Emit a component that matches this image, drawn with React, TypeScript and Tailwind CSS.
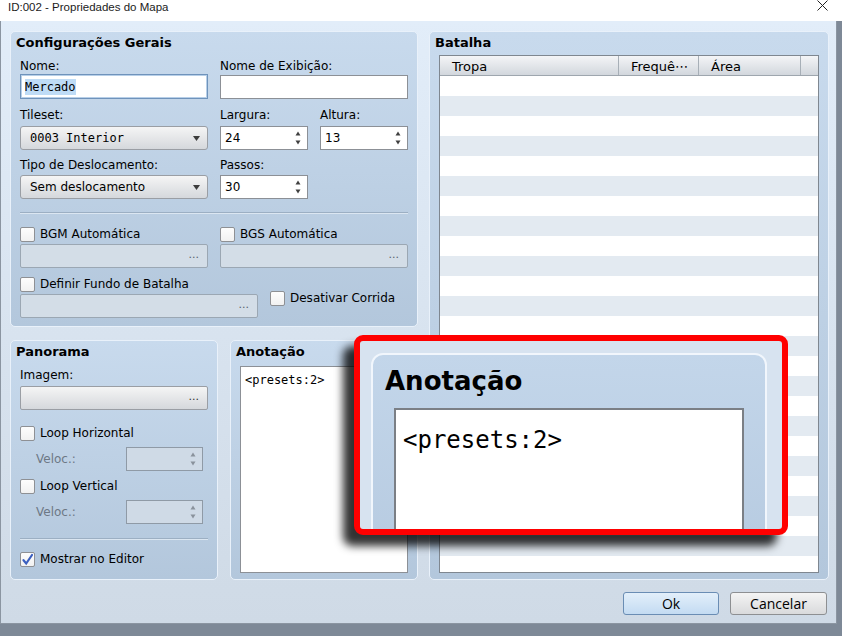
import React from 'react';

const mono = "font-['DejaVu_Sans_Mono',monospace]";

function Label({ children, className = '' }: { children: React.ReactNode; className?: string }) {
  return <div className={`h-[14px] leading-[14px] ${className}`}>{children}</div>;
}

function Panel({ title, className = '', children }: { title: string; className?: string; children?: React.ReactNode }) {
  return (
    <section
      className={`flex flex-col rounded-[5px] border border-[#e9f1fa] bg-linear-to-b from-[#c8daed] to-[#b3c7dc] px-[9px] ${className}`}
    >
      <h2 className="-ml-[4px] mt-[3px] h-[16px] text-[13px] font-bold leading-[16px]">{title}</h2>
      {children}
    </section>
  );
}

function DownTri({ color = '#3c3c3c' }: { color?: string }) {
  return (
    <svg width="7" height="5" viewBox="0 0 7 5">
      <path d="M0 0h7L3.5 5z" fill={color} />
    </svg>
  );
}

function SpinArrows({ color = '#404040' }: { color?: string }) {
  return (
    <svg width="6" height="14" viewBox="0 0 6 14">
      <path d="M0.5 4.5L3 0.5L5.5 4.5z" fill={color} />
      <path d="M0.5 9.5H5.5L3 13.5z" fill={color} />
    </svg>
  );
}

function Select({ text, isMono = false }: { text: string; isMono?: boolean }) {
  return (
    <div className="flex h-[24px] w-[188px] items-center justify-between rounded-[3px] border border-[#9a9ea4] bg-linear-to-b from-[#f5f5f5] to-[#d5d8dc] pl-[9px] pr-[7px]">
      <span className={isMono ? mono : ''}>{text}</span>
      <DownTri />
    </div>
  );
}

function Spin({ value = '', disabled = false, className = 'w-[88px]' }: { value?: string; disabled?: boolean; className?: string }) {
  return (
    <div
      className={`flex h-[24px] items-center justify-between border pl-[4px] pr-[6px] ${className} ${
        disabled ? 'border-[#8f9aa6] bg-[#cfdae6]' : 'border-[#8c9096] bg-white'
      }`}
    >
      <span>{value}</span>
      <SpinArrows color={disabled ? '#8a929c' : '#404040'} />
    </div>
  );
}

function FileField({ enabled = false, className = 'w-[188px]' }: { enabled?: boolean; className?: string }) {
  return (
    <div
      className={`flex h-[24px] items-center justify-end rounded-[2px] border pr-[8px] text-[11px] leading-none ${className} ${
        enabled
          ? 'border-[#9a9ea4] bg-linear-to-b from-[#f5f5f5] to-[#d5d8dc] text-[#333]'
          : 'border-[#9ba7b3] bg-[#d3dde7] text-[#5a626b]'
      }`}
    >
      <span className="-mt-[4px]">...</span>
    </div>
  );
}

function Check({ label, checked = false, className = '' }: { label: string; checked?: boolean; className?: string }) {
  return (
    <div className={`flex h-[16px] items-center gap-[5px] ${className}`}>
      <span className="flex h-[15px] w-[15px] items-center justify-center rounded-[2px] border border-[#8e9094] bg-linear-to-b from-[#fdfdfd] to-[#f1f1f1]">
        {checked ? (
          <svg width="13" height="13" viewBox="0 0 13 13">
            <path d="M2.5 7.2L5.2 10.5L11 2" fill="none" stroke="#3b5fbf" strokeWidth="2.2" strokeLinecap="round" />
          </svg>
        ) : null}
      </span>
      <span className="leading-[14px]">{label}</span>
    </div>
  );
}

function Separator({ className = '' }: { className?: string }) {
  return <div className={`h-px bg-[#9cafc3] shadow-[0_1px_0_#dbe6f1] ${className}`} />;
}

function GeneralSettings() {
  return (
    <Panel title="Configurações Gerais" className="h-[296px]">
      <div className="mt-[8px] flex gap-[12px]">
        <Label className="w-[188px]">Nome:</Label>
        <Label>Nome de Exibição:</Label>
      </div>
      <div className="mt-[1px] flex gap-[12px]">
        <div className="flex h-[25px] w-[188px] items-center border border-[#6f93bb] bg-white pl-[4px] shadow-[inset_0_0_0_1px_#b7cfe8]">
          <span className={`${mono} bg-[#bfdcf6] leading-[16px]`}>Mercado</span>
        </div>
        <div className="mt-[1px] h-[24px] w-[188px] border border-[#8c9096] bg-white" />
      </div>

      <div className="mt-[9px] flex gap-[12px]">
        <Label className="w-[188px]">Tileset:</Label>
        <Label className="w-[88px]">Largura:</Label>
        <Label>Altura:</Label>
      </div>
      <div className="mt-[4px] flex gap-[12px]">
        <Select text="0003 Interior" isMono />
        <Spin value="24" />
        <Spin value="13" />
      </div>

      <div className="mt-[8px] flex gap-[12px]">
        <Label className="w-[188px]">Tipo de Deslocamento:</Label>
        <Label>Passos:</Label>
      </div>
      <div className="mt-[3px] flex gap-[12px]">
        <Select text="Sem deslocamento" />
        <Spin value="30" />
      </div>

      <Separator className="mt-[13px]" />

      <div className="mt-[13px] flex gap-[12px]">
        <Check label="BGM Automática" className="w-[188px]" />
        <Check label="BGS Automática" />
      </div>
      <div className="mt-[2px] flex gap-[12px]">
        <FileField />
        <FileField />
      </div>

      <div className="mt-[8px] flex items-end gap-[12px]">
        <div className="flex flex-col">
          <Check label="Definir Fundo de Batalha" />
          <FileField className="mt-[2px] w-[238px]" />
        </div>
        <Check label="Desativar Corrida" className="mb-[12px]" />
      </div>
    </Panel>
  );
}

function PanoramaPanel() {
  return (
    <Panel title="Panorama" className="h-[240px] w-[208px]">
      <Label className="mt-[8px]">Imagem:</Label>
      <FileField enabled className="mt-[4px] w-[188px]" />
      <Check label="Loop Horizontal" className="mt-[15px]" />
      <div className="mt-[6px] flex items-center">
        <span className="w-[106px] pl-[16px] text-[#6d7885]">Veloc.:</span>
        <Spin disabled className="w-[77px]" />
      </div>
      <Check label="Loop Vertical" className="mt-[7px]" />
      <div className="mt-[6px] flex items-center">
        <span className="w-[106px] pl-[16px] text-[#6d7885]">Veloc.:</span>
        <Spin disabled className="w-[77px]" />
      </div>
      <Separator className="mt-[14px]" />
      <Check label="Mostrar no Editor" checked className="mt-[12px]" />
    </Panel>
  );
}

function NotesPanel() {
  return (
    <Panel title="Anotação" className="h-[240px] w-[188px]">
      <div className="mt-[6px] h-[207px] border border-[#8c9096] bg-white pl-[4px] pt-[6px]">
        <div className={`${mono} leading-[15px]`}>&lt;presets:2&gt;</div>
      </div>
    </Panel>
  );
}

function BattlePanel() {
  const rows = Array.from({ length: 25 }, (_, i) => i);
  return (
    <Panel title="Batalha" className="h-[549px] w-[400px]">
      <div className="mt-[4px] h-[518px] overflow-hidden border border-[#7f8790] bg-white">
        <div className="flex h-[20px] border-b border-[#9ea6ae] bg-linear-to-b from-[#f4f5f7] to-[#d2d7dd] text-[13px] leading-[22px]">
          <div className="w-[179px] border-r border-[#a7afb7] pl-[12px]">Tropa</div>
          <div className="w-[80px] border-r border-[#a7afb7] pl-[12px]">Frequê⋯</div>
          <div className="w-[102px] border-r border-[#a7afb7] pl-[12px]">Área</div>
          <div className="flex-1" />
        </div>
        {rows.map((i) => (
          <div key={i} className={`h-[20px] ${i % 2 === 0 ? 'bg-white' : 'bg-[#e3eaf1]'}`} />
        ))}
      </div>
    </Panel>
  );
}

function Callout() {
  return (
    <div className="absolute left-[354px] top-[335px] h-[200px] w-[434px] overflow-hidden rounded-[9px] border-[6px] border-[#ff0000] bg-[#d7e3f0] shadow-[-11px_11px_8px_rgba(0,0,0,0.8)]">
      <div className="ml-[11px] mt-[12px] h-[220px] w-[396px] rounded-[12px] border-2 border-[#f1f6fc] bg-linear-to-b from-[#c3d6ea] to-[#b6cae0]">
        <div className="mt-[11px] pl-[12px] text-[26px] font-bold leading-[30px]">Anotação</div>
        <div className="ml-[21px] mt-[12px] h-[200px] w-[350px] border-2 border-[#7b7f85] bg-white pl-[7px] pt-[16px]">
          <div className={`${mono} text-[24px] leading-[28px]`}>&lt;presets:2&gt;</div>
        </div>
      </div>
    </div>
  );
}

export default function App() {
  return (
    <div className="relative h-[636px] w-[842px] overflow-hidden bg-[#7e8997] font-['DejaVu_Sans',sans-serif] text-[12px] text-black">
      <div className="flex h-[21px] items-start justify-between bg-white pl-[8px] pr-[14px] font-['Liberation_Sans',sans-serif] text-[11.5px] leading-[14px] text-[#1b1b1b]">
        <span>ID:002 - Propriedades do Mapa</span>
        <svg width="11" height="11" viewBox="0 0 11 11" className="mt-[0px]">
          <path d="M0.5 0.5L10.5 10.5M10.5 0.5L0.5 10.5" stroke="#222" strokeWidth="1" />
        </svg>
      </div>

      <div className="flex h-[603px] w-[837px] flex-col border-b border-l border-r border-[#8b95a1] bg-linear-to-b from-[#e2edf9] to-[#cfdae6] pl-[9px] pr-[7px] pt-[10px]">
        <div className="flex gap-[11px]">
          <div className="flex w-[408px] flex-col gap-[13px]">
            <GeneralSettings />
            <div className="flex gap-[12px]">
              <PanoramaPanel />
              <NotesPanel />
            </div>
          </div>
          <BattlePanel />
        </div>

        <div className="mr-[2px] mt-[12px] flex justify-end gap-[11px] font-['Open_Sans',sans-serif] text-[14px]">
          <button
            type="button"
            className="h-[23px] w-[96px] rounded-[3px] border border-[#6a8db4] bg-linear-to-b from-[#e3effa] to-[#c3dbf2] leading-[20px]"
          >
            Ok
          </button>
          <button
            type="button"
            className="h-[23px] w-[97px] rounded-[3px] border border-[#8d8f92] bg-linear-to-b from-[#f4f4f4] to-[#d9dadc] leading-[20px]"
          >
            Cancelar
          </button>
        </div>
      </div>

      <Callout />
    </div>
  );
}
